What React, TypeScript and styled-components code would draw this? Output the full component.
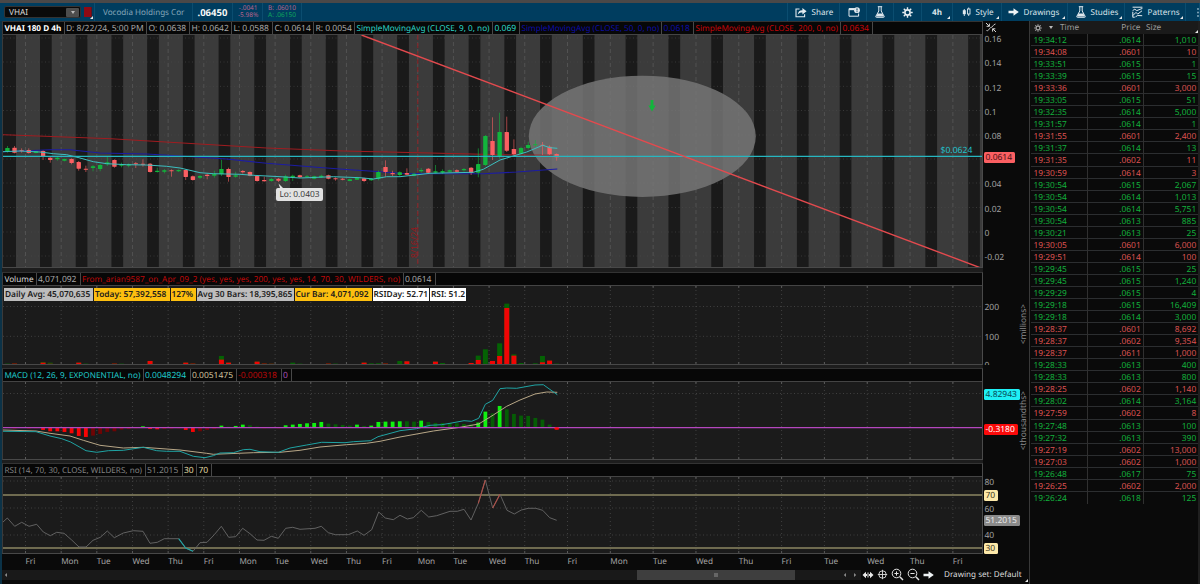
import React from 'react';
import styled, { createGlobalStyle } from 'styled-components';

const Global = createGlobalStyle`
  * { box-sizing: border-box; }
  body {
    margin: 0;
    background: #0a0a0a;
    font-family: 'Noto Sans', 'Open Sans', sans-serif;
    font-size: 8.25px;
    color: #a8a8a8;
    overflow: hidden;
    text-rendering: geometricPrecision;
  }
  svg { display: block; flex: none; }
`;

/* ---------- shell ---------- */

const Page = styled.div`
  width: 1200px;
  height: 584px;
  display: flex;
  flex-direction: column;
  background: #0a0a0a;
  overflow: hidden;
  white-space: nowrap;
`;
const TopStrip = styled.div`
  height: 3px;
  flex: none;
  background: #4a4848;
`;
const Toolbar = styled.header`
  height: 18px;
  flex: none;
  display: flex;
  align-items: stretch;
  background: #003d5f;
  padding-left: 4px;
`;
const ToolCell = styled.div<{ $w: number; $pad?: number }>`
  width: ${p => p.$w}px;
  flex: none;
  display: flex;
  align-items: center;
  padding-left: ${p => p.$pad ?? 8}px;
  gap: 4.5px;
  color: #dbe4ea;
  font-size: 8.1px;
  border-right: 1px solid #0b4d70;
  position: relative;
`;
const Spacer = styled.div`flex: 1; border-right: 1px solid #0b4d70;`;
const Corner = styled.i`
  position: absolute;
  right: 2px;
  bottom: 2px;
  border-left: 3px solid transparent;
  border-bottom: 3px solid #e8e8e8;
`;
const SymbolBox = styled.div`
  width: 77px;
  height: 12px;
  align-self: center;
  display: flex;
  align-items: center;
  justify-content: space-between;
  padding: 0 1px 0 4px;
  background: #0a0a0a;
  border: 1px solid #333;
  border-radius: 2px;
  color: #d8d8d8;
`;
const DropButton = styled.span`
  width: 13px;
  height: 9px;
  display: grid;
  place-items: center;
  background: #4d4d4d;
  border-radius: 1px;
`;
const Triangle = styled.i`
  border: 2.5px solid transparent;
  border-top: 3.5px solid #bbb;
  border-bottom: 0;
`;
const LinkCell = styled.div`
  width: 14px;
  display: flex;
  align-items: center;
  padding-left: 3px;
  border-right: 1px solid #0b4d70;
`;
const LinkBadge = styled.span`
  width: 8px;
  height: 10px;
  background: #8f0a14;
  border-right: 1.5px solid #5a1420;
  position: relative;
`;
const Company = styled.span`color: #84a5b7; font-size: 8.1px;`;
const LastPrice = styled.b`color: #f8f8f8; font-size: 9.5px; font-weight: 700;`;
const Pair = styled.div<{ $right?: boolean }>`
  display: flex;
  flex-direction: column;
  font-size: 6.5px;
  line-height: 6.6px;
  text-align: ${p => (p.$right ? 'center' : 'left')};
`;
const Tone = styled.span<{ $c: string }>`color: ${p => p.$c};`;

const Body = styled.div`
  flex: 1;
  display: flex;
  min-height: 0;
`;
const ChartColumn = styled.main`
  width: 1029px;
  flex: none;
  display: flex;
  flex-direction: column;
  border-left: 2px solid #0b3247;
`;

/* ---------- panels ---------- */

const Panel = styled.section<{ $h: number; $gap?: number }>`
  height: ${p => p.$h}px;
  margin-bottom: ${p => p.$gap ?? 0}px;
  flex: none;
  display: flex;
  position: relative;
  &::after {
    content: '';
    position: absolute;
    left: 0;
    top: 100%;
    width: 981px;
    height: ${p => p.$gap ?? 0}px;
    background: #1d1d1d;
  }
`;
const PanelMain = styled.div`
  width: 981px;
  flex: none;
  border-right: 1px solid #4a4a4a;
  border-left: 1px solid #3a3a3a;
  border-bottom: 1px solid #484848;
  border-top: 1px solid #333;
`;
const Legend = styled.div<{ $h: number }>`
  height: ${p => p.$h}px;
  display: flex;
  background: #070707;
  border-bottom: 1px solid #444;
`;
const LegendCell = styled.span<{ $w: number; $c?: string; $bold?: boolean; $fs?: number }>`
  width: ${p => p.$w}px;
  flex: none;
  padding-left: 1.4px;
  display: flex;
  align-items: center;
  color: ${p => p.$c ?? '#a6a6a6'};
  font-weight: ${p => (p.$bold ? 700 : 400)};
  font-size: ${p => p.$fs ?? 8.5}px;
  border-right: 1px solid #484848;
`;
const Axis = styled.div`
  flex: 1;
  position: relative;
  display: flex;
  justify-content: space-between;
  overflow: hidden;
`;
const Ticks = styled.div<{ $top: number }>`
  padding-top: ${p => p.$top}px;
  padding-left: 1.5px;
  display: flex;
  flex-direction: column;
`;
const Tick = styled.span<{ $h: number }>`
  height: ${p => p.$h}px;
  flex: none;
  line-height: 13px;
  font-size: 8.5px;
  color: #a0a0a0;
`;
const Flag = styled.span<{ $y: number; $bg: string; $c: string; $w: number }>`
  position: absolute;
  left: 1px;
  top: ${p => p.$y}px;
  width: ${p => p.$w}px;
  height: 11px;
  line-height: 11.5px;
  padding-left: 1.5px;
  border-radius: 1.5px;
  background: ${p => p.$bg};
  color: ${p => p.$c};
  font-size: 8.5px;
`;
const Unit = styled.span<{ $top: number }>`
  writing-mode: vertical-rl;
  transform: rotate(180deg);
  align-self: flex-start;
  margin-top: ${p => p.$top}px;
  line-height: 11px;
  font-size: 8.4px;
  color: #8c8c8c;
`;
const Plot = styled.div`position: relative;`;
const StatRow = styled.div`
  position: absolute;
  left: 1px;
  top: 1.5px;
  display: flex;
  gap: 1px;
`;
const Stat = styled.span<{ $bg: string; $w: number }>`
  width: ${p => p.$w}px;
  height: 13px;
  line-height: 13.5px;
  padding-left: 1px;
  background: ${p => p.$bg};
  color: #1c1c1c;
  font-weight: 600;
  font-size: 8.35px;
`;
const LowTip = styled.span`
  position: absolute;
  left: 273px;
  top: 153px;
  width: 47px;
  height: 13px;
  line-height: 14px;
  text-align: center;
  background: #e2e2e2;
  color: #3a3a3a;
  border-radius: 2px;
  font-size: 8.4px;
`;
const LineLabel = styled.span`
  position: absolute;
  left: 937.5px;
  top: 109.2px;
  line-height: 12px;
  color: #22c3cc;
  font-size: 8.6px;
`;

/* ---------- time axis and bottom bar ---------- */

const TimeAxis = styled.div`
  height: 15px;
  flex: none;
  display: flex;
  align-items: center;
  padding-left: 23.5px;
  padding-bottom: 1px;
`;
const Day = styled.span<{ $w: number }>`
  width: ${p => p.$w}px;
  flex: none;
  font-size: 8.2px;
  color: #a6a6a6;
`;
const BottomBar = styled.div`
  height: 11px;
  flex: none;
  display: flex;
  align-items: center;
  color: #dadada;
`;
const ScrollTrack = styled.div`
  width: 859px;
  height: 10px;
  display: flex;
  align-items: center;
  background: #191919;
  padding: 0 4px 0 2px;
`;
const ScrollThumb = styled.div`
  width: 158px;
  height: 10px;
  margin-left: 629px;
  margin-right: auto;
  background: #3e3e3e;
  display: grid;
  place-items: center;
`;
const Grip = styled.i`width: 4px; height: 4px; background: #666;`;
const BarIcons = styled.div`
  display: flex;
  gap: 3px;
  padding-left: 1px;
  width: 83px;
  align-items: center;
`;
const DrawingSet = styled.span`
  font-size: 8.1px;
  width: 85px;
  position: relative;
`;

/* ---------- time and sales ---------- */

const Sales = styled.aside`
  flex: 1;
  border-left: 1.5px solid #383838;
  border-right: 2px solid #1f1f1f;
`;
const SalesHead = styled.div`
  height: 13px;
  display: grid;
  grid-template-columns: 56px 56px 1fr;
  align-items: center;
  background: #1a1a1a;
  color: #9c9c9c;
  position: relative;
`;
const HeadCell = styled.span<{ $right?: boolean }>`
  display: flex;
  align-items: center;
  gap: 7px;
  padding: ${p => (p.$right ? '0 1.5px 0 0' : '0 0 0 4px')};
  justify-content: ${p => (p.$right ? 'flex-end' : 'flex-start')};
`;
const SalesRow = styled.div<{ $up: boolean }>`
  height: 12.06px;
  margin-left: 1px;
  display: grid;
  grid-template-columns: 55.5px 56px 1fr;
  color: ${p => (p.$up ? '#12b03c' : '#dd5251')};
  border-bottom: 1px solid #2c2e30;
  line-height: 13px;
  font-size: 8.4px;
  &:last-child { border-bottom: 0; }
`;
const SalesCell = styled.span<{ $right?: boolean }>`
  height: 12px;
  padding: ${p => (p.$right ? '0 1.8px 0 0' : '0 0 0 2.5px')};
  text-align: ${p => (p.$right ? 'right' : 'left')};
  & + & { border-left: 1px solid #303030; }
`;

/* ---------- data ---------- */

const GREEN = '#12b53c';
const RED = '#fb5f62';
const STEP = 7.134;
const barX = (i: number) => 7.4 + i * STEP;

// [direction, body top, body bottom, wick top, wick bottom], in thirds of a pixel
type Candle = [string, number, number, number, number];
const candles: Candle[] = [
  ['g', 444, 454, 438, 458], ['r', 443, 458, 438, 460], ['r', 451, 454, 445, 458], ['r', 450, 459, 445, 461],
  ['g', 454, 459, 453, 460], ['r', 453, 471, 451, 480], ['r', 473, 480, 470, 488], ['g', 473, 478, 471, 482],
  ['g', 477, 482, 476, 484], ['r', 477, 489, 475, 493], ['r', 486, 506, 483, 512], ['r', 506, 509, 497, 516],
  ['g', 499, 504, 495, 514], ['g', 495, 507, 492, 514], ['g', 487, 493, 468, 498], ['r', 480, 500, 478, 503],
  ['g', 493, 497, 488, 502], ['g', 493, 497, 490, 502], ['r', 490, 493, 486, 504], ['r', 491, 494, 478, 500],
  ['r', 491, 516, 489, 518], ['g', 512, 516, 503, 518], ['g', 511, 515, 507, 520], ['r', 511, 514, 508, 530],
  ['g', 510, 514, 508, 516], ['r', 510, 531, 508, 540], ['r', 529, 540, 526, 542], ['g', 528, 533, 525, 537],
  ['r', 524, 528, 520, 538], ['g', 522, 527, 512, 533], ['g', 507, 523, 479, 528], ['r', 507, 531, 503, 545],
  ['g', 526, 530, 515, 533], ['r', 513, 517, 510, 521], ['r', 516, 527, 514, 529], ['r', 528, 543, 526, 545],
  ['r', 540, 544, 530, 545], ['g', 537, 543, 534, 545], ['r', 536, 542, 534, 546], ['g', 529, 543, 524, 546],
  ['g', 527, 532, 524, 543], ['r', 526, 532, 524, 534], ['g', 528, 530, 525, 532], ['g', 529, 536, 527, 538],
  ['g', 527, 532, 524, 534], ['r', 526, 536, 524, 538], ['r', 535, 538, 532, 542], ['r', 536, 539, 534, 541],
  ['g', 538, 543, 536, 544], ['g', 534, 539, 530, 540], ['r', 535, 543, 533, 546], ['g', 536, 541, 534, 543],
  ['g', 516, 537, 512, 541], ['r', 501, 516, 481, 530], ['r', 519, 523, 512, 528], ['g', 517, 525, 514, 530],
  ['r', 519, 524, 505, 526], ['g', 521, 527, 518, 529], ['g', 510, 514, 504, 518], ['r', 506, 518, 504, 522],
  ['g', 514, 518, 495, 520], ['g', 513, 518, 508, 522], ['g', 511, 515, 509, 517], ['r', 511, 515, 508, 517],
  ['g', 507, 511, 504, 515], ['r', 503, 519, 501, 525], ['g', 492, 518, 445, 532], ['g', 408, 495, 405, 498],
  ['r', 423, 465, 352, 480], ['g', 396, 468, 338, 476], ['r', 396, 452, 350, 456], ['r', 447, 463, 418, 468],
  ['g', 444, 461, 440, 464], ['g', 435, 444, 425, 448], ['g', 433, 436, 420, 440], ['r', 434, 437, 426, 465],
  ['r', 440, 463, 436, 465], ['r', 462, 472, 460, 482],
];

// [bar index, total height, red part], in thirds of a pixel
const volume: [number, number, number][] = [
  [0, 2, 0], [1, 3, 3], [5, 7, 5], [6, 5, 2], [10, 5, 5], [11, 2, 0], [15, 3, 3], [16, 2, 0], [20, 10, 10],
  [25, 5, 5], [26, 3, 3], [30, 25, 14], [31, 5, 5], [35, 8, 8], [36, 3, 3], [37, 2, 2], [40, 5, 0], [41, 2, 0],
  [45, 3, 3], [46, 2, 0], [50, 5, 5], [51, 3, 0], [52, 3, 0], [53, 3, 3], [55, 10, 0], [56, 9, 9], [60, 8, 8],
  [61, 4, 0], [65, 4, 4], [66, 26, 13], [67, 45, 0], [68, 10, 10], [69, 63, 25], [70, 182, 169], [71, 30, 26],
  [72, 4, 0], [74, 3, 0], [75, 25, 6], [76, 11, 11], [77, 2, 0],
];

// signed heights in thirds of a pixel; the second entry marks a strengthening bar
const histogram: [number, number][] = [
  [-2, 0], [-4, 0], [0, 0], [-4, 0], [-3, 0], [-8, 1], [-12, 1], [-12, 1], [-14, 1], [-18, 1], [-26, 1], [-29, 1],
  [-25, 0], [-20, 0], [-14, 0], [-12, 0], [-7, 0], [-5, 0], [-3, 0], [3, 1], [-5, 1], [-6, 1], [-5, 0], [-4, 0],
  [-3, 0], [-8, 1], [-14, 1], [-12, 0], [-8, 0], [-5, 0], [5, 1], [2, 0], [4, 1], [8, 1], [6, 0], [2, 0],
  [-3, 0], [-2, 0], [-3, 0], [6, 1], [8, 1], [10, 1], [12, 1], [13, 1], [16, 1], [11, 0], [9, 0], [7, 0],
  [5, 0], [8, 1], [4, 0], [5, 1], [16, 1], [17, 1], [17, 1], [18, 1], [18, 0], [17, 0], [20, 1], [16, 0],
  [13, 0], [13, 0], [13, 0], [12, 0], [10, 0], [9, 0], [14, 1], [47, 1], [42, 0], [64, 1], [54, 0], [40, 0],
  [35, 0], [34, 0], [28, 0], [23, 0], [8, 0], [-6, 1],
];

const thirds = (s: string, dy = 0) =>
  s.split(' ').map(p => {
    const [x, y] = p.split(',').map(Number);
    return `${(x / 3).toFixed(1)},${(y / 3 + dy).toFixed(1)}`;
  }).join(' ');

const sma9 = thirds('8,455 60,453 120,456 160,461 200,464 240,474 280,485 320,491 380,494 440,495 500,499 540,504 570,511 600,518 640,521 720,523 760,526 840,530 900,534 1000,530 1080,533 1120,537 1160,530 1200,530 1290,520 1420,517 1450,508 1500,480 1540,468 1580,456 1628,436 1650,443 1672,445');
const sma50 = thirds('8,455 150,449 210,449 300,459 440,462 540,468 680,477 800,490 950,502 1050,509 1120,514 1200,520 1300,521 1450,521 1550,516 1672,507');
const sma200 = thirds('8,404 330,416 800,444 1030,453 1200,457 1500,464 1660,466');
const macd = thirds('8,199 108,200 150,213 185,221 212,231 258,257 290,262 325,257 370,256 430,247 470,257 500,259 540,259 580,274 615,278 640,272 660,264 700,263 730,254 750,253 780,260 835,262 870,249 920,240 965,232 1035,233 1060,230 1112,227 1134,215 1200,197 1250,191 1290,181 1325,179 1350,175 1392,167 1415,169 1436,160 1456,118 1478,106 1500,71 1520,69 1550,70 1605,60 1630,59 1672,89', 365);
const signal = thirds('8,195 108,198 150,205 210,213 250,226 300,241 370,249 430,247 540,255 620,265 640,268 760,263 840,262 900,256 960,246 1040,239 1100,235 1140,229 1200,216 1300,198 1380,187 1436,177 1480,150 1520,124 1560,105 1605,87 1640,81 1672,82', 365);
const rsi = thirds('8,472 22,459 44,484 65,472 87,484 110,478 130,501 151,512 170,502 192,505 215,525 237,546 258,546 279,526 301,517 322,498 343,518 370,504 400,497 429,499 450,535 472,532 493,521 536,521 557,549 579,559 600,533 621,532 643,509 664,484 686,517 707,515 728,490 750,506 771,525 792,526 814,514 835,520 857,490 878,487 900,493 945,490 964,484 985,503 1006,509 1045,509 1072,498 1092,511 1115,494 1136,441 1156,459 1180,464 1200,451 1222,462 1240,458 1264,436 1286,456 1310,452 1350,439 1372,439 1392,433 1413,465 1435,415 1456,345 1478,429 1500,388 1521,436 1543,447 1564,435 1585,430 1607,430 1628,436 1649,458 1670,466', 365);
const rsiLow = thirds('536,521 557,549 579,559', 365);
const rsiHigh1 = thirds('1435,415 1456,345', 365);
const rsiHigh2 = thirds('1478,429 1500,388', 365);

const dayLabels = ['Fri', 'Mon', 'Tue', 'Wed', 'Thu', 'Fri', 'Mon', 'Tue', 'Wed', 'Thu', 'Fri', 'Mon', 'Tue', 'Wed', 'Thu', 'Fri', 'Mon', 'Tue', 'Wed', 'Thu', 'Fri', 'Tue', 'Wed', 'Thu', 'Fri'];
const dayX = dayLabels.map((_, i) => (i < 15 ? 25.5 + i * 35.66 : 567.5 + (i - 15) * 42.82));
const closedX = [...Array(15)].map((_, i) => 40 + i * 35.72).concat([...Array(10)].map((_, i) => 582.8 + i * 42.82));

const sales: [string, string, string, 0 | 1][] = [
  ['19:34:12', '.0614', '1,010', 1], ['19:34:08', '.0601', '10', 0], ['19:33:51', '.0615', '1', 1],
  ['19:33:39', '.0615', '15', 1], ['19:33:36', '.0601', '3,000', 0], ['19:33:05', '.0615', '51', 1],
  ['19:32:35', '.0614', '5,000', 1], ['19:31:57', '.0614', '1', 1], ['19:31:55', '.0601', '2,400', 0],
  ['19:31:37', '.0614', '13', 1], ['19:31:35', '.0602', '11', 0], ['19:30:59', '.0614', '3', 0],
  ['19:30:54', '.0615', '2,067', 1], ['19:30:54', '.0614', '1,013', 1], ['19:30:54', '.0614', '5,751', 1],
  ['19:30:54', '.0613', '885', 1], ['19:30:21', '.0613', '25', 1], ['19:30:05', '.0601', '6,000', 0],
  ['19:29:51', '.0614', '100', 0], ['19:29:45', '.0615', '25', 1], ['19:29:45', '.0615', '1,240', 1],
  ['19:29:29', '.0615', '4', 1], ['19:29:18', '.0615', '16,409', 1], ['19:29:18', '.0614', '3,000', 1],
  ['19:28:37', '.0601', '8,692', 0], ['19:28:37', '.0602', '9,354', 0], ['19:28:37', '.0611', '1,000', 0],
  ['19:28:33', '.0613', '400', 1], ['19:28:33', '.0613', '800', 1], ['19:28:25', '.0602', '1,140', 0],
  ['19:28:02', '.0614', '3,164', 1], ['19:27:59', '.0602', '8', 0], ['19:27:48', '.0613', '100', 1],
  ['19:27:32', '.0613', '390', 1], ['19:27:19', '.0602', '13,000', 0], ['19:27:03', '.0602', '1,000', 0],
  ['19:26:48', '.0617', '75', 1], ['19:26:25', '.0602', '2,000', 0], ['19:26:24', '.0618', '125', 1],
];

/* ---------- icons ---------- */

const FlaskIcon = () => (
  <svg width="10" height="12" viewBox="0 0 10 12" fill="none" stroke="#dfe8ee" strokeWidth="1">
    <path d="M2.8 .7h4.4M3.8 .7v4.3L.8 10.4q-.3 .9.6 .9h7.2q.9 0 .6-.9L6.2 5V.7" />
    <path d="M2.6 7.6h4.8l1.4 3H1.2z" fill="#dfe8ee" stroke="none" />
  </svg>
);
const GearIcon = ({ size = 11, color = '#e8eef2' }: { size?: number; color?: string }) => (
  <svg width={size} height={size} viewBox="0 0 11 11" fill="none" stroke={color}>
    <circle cx="5.5" cy="5.5" r="2.6" strokeWidth="1.6" />
    <path d="M5.5 .3v2M5.5 8.7v2M.3 5.5h2M8.7 5.5h2M1.8 1.8l1.4 1.4M7.8 7.8l1.4 1.4M1.8 9.2l1.4-1.4M7.8 3.2l1.4-1.4" strokeWidth="1.4" />
  </svg>
);
const ShareIcon = () => (
  <svg width="12" height="11" viewBox="0 0 12 11" fill="none" stroke="#e2eaef" strokeWidth="1.1">
    <path d="M4.5 2H1v7.8h8.6V7.2" />
    <path d="M2.8 7.6c.3-2.9 1.8-4.3 4.6-4.3V1l4.2 3.3-4.2 3.2V5.4c-2.2 0-3.6.6-4.6 2.2z" fill="#e2eaef" stroke="none" />
  </svg>
);
const CalendarIcon = () => (
  <svg width="12" height="10" viewBox="0 0 12 10" fill="none" stroke="#e2eaef">
    <path d="M7 1.6H1v7.6h9.6V6.5" strokeWidth="1" />
    <path d="M1 2.4h5.6" strokeWidth="1.6" />
    <circle cx="9" cy="3.2" r="2.9" fill="#e2eaef" stroke="none" />
    <path d="M9 1.4v2.1M9 4.2v1" stroke="#003d5f" strokeWidth="1" />
  </svg>
);
const StyleIcon = () => (
  <svg width="9" height="10" viewBox="0 0 9 10" fill="none" stroke="#e2eaef">
    <path d="M2.3 2v7M6.7 .5v1.5M6.7 7v2" strokeWidth=".9" />
    <rect x=".8" y="3.2" width="3" height="4" fill="#e2eaef" stroke="none" />
    <rect x="5.5" y="2" width="2.5" height="5" strokeWidth=".9" />
  </svg>
);
const ArrowIcon = ({ w = 11 }: { w?: number }) => (
  <svg width={w} height="8" viewBox="0 0 11 8" fill="#eef2f4">
    <path d="M.5 2.8h5V.2L10.8 4 5.5 7.8V5.2h-5z" />
  </svg>
);
const PatternsIcon = () => (
  <svg width="11" height="12" viewBox="0 0 11 12" fill="none" stroke="#e2eaef" strokeWidth="1">
    <path d="M.6 1.2h9.8M.6 4.6l2.2-1.4 2 1.4L10.4 2.4M.8 5.8v5.5M.8 11.2h2M.8 9.6L4 6.4l1.700 1.700 4.300-3.300M3.500 10.800l2.200-1.300 4.500 .2" />
  </svg>
);
const MoreIcon = () => (
  <svg width="2" height="11" viewBox="0 0 2 11" fill="#8fb0c2">
    <circle cx="1" cy="2" r=".9" /><circle cx="1" cy="5.5" r=".9" /><circle cx="1" cy="9" r=".9" />
  </svg>
);
const ExpandIcon = () => (
  <svg width="12" height="11" viewBox="0 0 12 11" fill="none" stroke="#d8d8d8" strokeWidth="1">
    <path d="M1 1l3.200 3.200M4.400 1.600v2.700H1.600M11 10L7.800 6.800M10.300 6.800H7.600v2.800" />
    <path d="M1.500 8.500c2.600 1 2.200-2.500 4.500-3s1.700-3 4.500-3.500" strokeWidth=".9" />
  </svg>
);
const PanIcon = () => (
  <svg width="12" height="8" viewBox="0 0 12 8" fill="#e8e8e8">
    <path d="M.5 4L4 .8v2.200h1v2H4v2.200zM11.500 4L8 .8v2.200H7v2h1v2.200zM5.500 1.500h1v5h-1z" />
  </svg>
);
const CrosshairIcon = () => (
  <svg width="11" height="11" viewBox="0 0 11 11" fill="none" stroke="#dcdcdc" strokeWidth=".9">
    <circle cx="5.500" cy="5.500" r="3.700" /><path d="M5.500 .8v9.400M.8 5.500h9.400" />
  </svg>
);
const ZoomIcon = ({ plus }: { plus?: boolean }) => (
  <svg width="13" height="13" viewBox="0 0 13 13" fill="none" stroke="#e4e4e4">
    <circle cx="5.500" cy="5.500" r="4.300" strokeWidth="1" />
    <path d={plus ? 'M3.400 5.500h4.200M5.500 3.400v4.200' : 'M3.400 5.500h4.200'} strokeWidth="1" />
    <path d="M8.800 8.800l3.200 3.200" strokeWidth="1.500" />
  </svg>
);
const ChevronIcon = ({ right }: { right?: boolean }) => (
  <svg width="4" height="6" viewBox="0 0 4 6" fill="#8a8a8a">
    <path d={right ? 'M1 1l2.200 2L1 5z' : 'M3 1L.8 3 3 5z'} />
  </svg>
);

/* ---------- charts ---------- */

const DayGrid = ({ y1, y2, dash, color }: { y1: number; y2: number; dash: string; color: string }) => (
  <g stroke={color} strokeWidth="1" strokeDasharray={dash}>
    {dayX.map(x => <line key={x} x1={x} x2={x} y1={y1} y2={y2} />)}
  </g>
);
const DayTicks = ({ ys }: { ys: number[] }) => (
  <g stroke="#5a5a5a" strokeWidth="1">
    {ys.map(y => dayX.map(x => <line key={`${x}-${y}`} x1={x} x2={x} y1={y} y2={y + 2} />))}
  </g>
);
const Rows = ({ ys }: { ys: number[] }) => (
  <g stroke="#4a4a4a" strokeWidth=".8" strokeDasharray="1 2.500">
    {ys.map(y => <line key={y} x1="3" x2="982" y1={y} y2={y} />)}
  </g>
);

const PriceChart = () => (
  <svg width="979" height="232" viewBox="3 35 979 232">
    <rect x="3" y="35" width="979" height="233" fill="#3b3b3b" />
    <rect x="3" y="35" width="13" height="233" fill="#1a1a1a" />
    {closedX.map(x => <rect key={x} x={x} y="35" width="11.700" height="233" fill="#1a1a1a" />)}
    <g opacity=".8"><Rows ys={[38, 62, 86.300, 110.500, 135, 159, 183, 207.500, 232, 256]} /></g>
    <DayGrid y1={35} y2={268} dash="4 3" color="#525252" />
    <line x1="417.800" x2="417.800" y1="35" y2="268" stroke="#8e2024" strokeWidth="1" strokeDasharray="5 3" />
    <text transform="translate(416.500 258) rotate(-90)" fill="#96191d" fontSize="8.600">8/16/24</text>
    <ellipse cx="642.300" cy="136.300" rx="113.500" ry="60.600" fill="#757575" opacity=".85" />
    <polyline points={sma200} fill="none" stroke="#a01c20" strokeWidth="1" />
    <polyline points={sma50} fill="none" stroke="#1c1ca4" strokeWidth="1.100" />
    {candles.map(([d, top, bottom, high, low], i) => {
      const c = d === 'g' ? GREEN : RED;
      return (
        <g key={i} fill={c}>
          <rect x={barX(i) - .4} y={high / 3} width=".8" height={(low - high) / 3} opacity=".75" />
          <rect x={barX(i) - 2.200} y={top / 3} width="4.400" height={(bottom - top) / 3} rx=".4" />
        </g>
      );
    })}
    <polyline points={sma9} fill="none" stroke="#3cc0c0" strokeWidth="1" />
    <line x1="3" x2="982" y1="156.400" y2="156.400" stroke="#27b6c0" strokeWidth="1.100" />
    <line x1="361.500" x2="981" y1="35" y2="268" stroke="#e34a4e" strokeWidth="1.400" />
    <path d="M650.600 100h2.800v5.500h2.200L652 111.500l-3.600-6h2.200z" fill="#12b53c" />
    <path d="M278.500 183.500l2 6h4z" fill="#e2e2e2" />
  </svg>
);

const VolumeChart = () => (
  <svg width="979" height="78" viewBox="3 286 979 78">
    <rect x="3" y="286" width="979" height="79" fill="#1b1b1b" />
    <Rows ys={[306.500, 336.300]} />
    <DayGrid y1={286} y2={364} dash="1 3" color="#404040" />
    <DayTicks ys={[286, 362]} />
    {volume.map(([i, total, red]) => (
      <g key={i}>
        <rect x={barX(i) - 2.500} y={364.300 - total / 3} width="5" height={total / 3} fill="#046204" />
        <rect x={barX(i) - 2.500} y={364.300 - red / 3} width="5" height={red / 3} fill={red > 3 ? '#f00505' : '#8c0505'} />
      </g>
    ))}
  </svg>
);

const MacdChart = () => (
  <svg width="979" height="77" viewBox="3 382 979 77">
    <rect x="3" y="382" width="979" height="78" fill="#1b1b1b" />
    <Rows ys={[393.500]} />
    <DayGrid y1={382} y2={459} dash="1 3" color="#404040" />
    <DayTicks ys={[382, 457]} />
    {histogram.map(([h, strong], i) => (
      <rect
        key={i}
        x={barX(i) - 1.900}
        y={427.300 - Math.max(h, 0) / 3}
        width="3.800"
        height={Math.abs(h) / 3}
        fill={h > 0 ? (strong ? '#10f010' : '#055c05') : strong ? '#f80404' : '#6e0404'}
      />
    ))}
    <polyline points={signal} fill="none" stroke="#b8a787" strokeWidth="1" />
    <polyline points={macd} fill="none" stroke="#1fa3a3" strokeWidth="1" />
    <line x1="3" x2="982" y1="427.600" y2="427.600" stroke="#b446be" strokeWidth="1.300" />
    <ellipse cx={barX(77)} cy="428.500" rx="2.500" ry="1.300" fill="#f80404" />
  </svg>
);

const RsiChart = () => (
  <svg width="979" height="76" viewBox="3 477 979 76">
    <rect x="3" y="477" width="979" height="77" fill="#1b1b1b" />
    <Rows ys={[481, 508, 535]} />
    <DayGrid y1={477} y2={553} dash="1 3" color="#404040" />
    <DayTicks ys={[477, 551]} />
    <g stroke="#8d8763" strokeWidth="1.500">
      <line x1="3" x2="982" y1="495" y2="495" />
      <line x1="3" x2="982" y1="548" y2="548" />
    </g>
    <polyline points={rsi} fill="none" stroke="#696969" strokeWidth=".9" />
    <polyline points={rsiLow} fill="none" stroke="#1fa3a3" strokeWidth="1.100" />
    <polyline points={rsiHigh1} fill="none" stroke="#b05048" strokeWidth="1.100" />
    <polyline points={rsiHigh2} fill="none" stroke="#b05048" strokeWidth="1.100" />
  </svg>
);

/* ---------- page ---------- */

export default function App() {
  return (
    <Page>
      <Global />
      <TopStrip />
      <Toolbar>
        <SymbolBox>VHAI<DropButton><Triangle /></DropButton></SymbolBox>
        <LinkCell><LinkBadge><Corner style={{ right: -2, bottom: -2 }} /></LinkBadge></LinkCell>
        <ToolCell $w={98}><Company>Vocodia Holdings Cor</Company></ToolCell>
        <ToolCell $w={40} $pad={4.5}><LastPrice>.06450</LastPrice></ToolCell>
        <ToolCell $w={30} $pad={5}>
          <Pair $right><Tone $c="#b5638c">-.0041</Tone><Tone $c="#b5638c">-5.98%</Tone></Pair>
        </ToolCell>
        <ToolCell $w={39} $pad={5}>
          <Pair><Tone $c="#b5638c">B: .06010</Tone><Tone $c="#0fa55c">A: .06150</Tone></Pair>
        </ToolCell>
        <Spacer />
        <ToolCell $w={52} $pad={7}><ShareIcon />Share</ToolCell>
        <ToolCell $w={27}><CalendarIcon /></ToolCell>
        <ToolCell $w={27}><FlaskIcon /></ToolCell>
        <ToolCell $w={28}><GearIcon /></ToolCell>
        <ToolCell $w={31} $pad={10}><b>4h</b><Corner /></ToolCell>
        <ToolCell $w={49} $pad={9}><StyleIcon />Style<Corner /></ToolCell>
        <ToolCell $w={66} $pad={6}><ArrowIcon />Drawings<Corner /></ToolCell>
        <ToolCell $w={57} $pad={8}><FlaskIcon />Studies<Corner /></ToolCell>
        <ToolCell $w={61} $pad={7}><PatternsIcon />Patterns<Corner /></ToolCell>
        <ToolCell $w={14} $pad={11}><MoreIcon /></ToolCell>
      </Toolbar>
      <Body>
        <ChartColumn>
          <Panel $h={247} $gap={4}>
            <PanelMain>
              <Legend $h={13}>
                <LegendCell $w={61.5} $c="#fff" $bold $fs={8.2}>VHAI 180 D 4h</LegendCell>
                <LegendCell $w={82.5}>D: 8/22/24, 5:00 PM</LegendCell>
                <LegendCell $w={43}>O: 0.0638</LegendCell>
                <LegendCell $w={42}>H: 0.0642</LegendCell>
                <LegendCell $w={41}>L: 0.0588</LegendCell>
                <LegendCell $w={41}>C: 0.0614</LegendCell>
                <LegendCell $w={41}>R: 0.0054</LegendCell>
                <LegendCell $w={138} $c="#2bd6c6" $fs={8.2}>SimpleMovingAvg (CLOSE, 9, 0, no)</LegendCell>
                <LegendCell $w={27} $c="#2bd6c6">0.069</LegendCell>
                <LegendCell $w={142} $c="#0c0ca4" $fs={8.2}>SimpleMovingAvg (CLOSE, 50, 0, no)</LegendCell>
                <LegendCell $w={32} $c="#0c0ca4">0.0618</LegendCell>
                <LegendCell $w={147} $c="#c80508" $fs={8.2}>SimpleMovingAvg (CLOSE, 200, 0, no)</LegendCell>
                <LegendCell $w={32} $c="#c80508">0.0634</LegendCell>
              </Legend>
              <Plot>
                <PriceChart />
                <LowTip>Lo: 0.0403</LowTip>
                <LineLabel>$0.0624</LineLabel>
              </Plot>
            </PanelMain>
            <Axis>
              <Ticks $top={1}>
                <Tick $h={11.3}><ExpandIcon /></Tick>
                {['0.16', '0.14', '0.12', '0.1', '0.08', '', '0.04', '0.02', '0', '-0.02'].map((t, i) => (
                  <Tick key={i} $h={24.2}>{t}</Tick>
                ))}
              </Ticks>
              <Flag $y={131} $w={31} $bg="#fb5f62" $c="#4a1214">0.0614</Flag>
            </Axis>
          </Panel>

          <Panel $h={93} $gap={3}>
            <PanelMain>
              <Legend $h={13}>
                <LegendCell $w={33.5} $c="#d8d8d8" $fs={8.2}>Volume</LegendCell>
                <LegendCell $w={44}>4,071,092</LegendCell>
                <LegendCell $w={323} $c="#bc0808" $fs={8.27}>From_arian9587_on_Apr_09_2 (yes, yes, yes, 200, yes, yes, 14, 70, 30, WILDERS, no)</LegendCell>
                <LegendCell $w={32}>0.0614</LegendCell>
              </Legend>
              <Plot>
                <VolumeChart />
                <StatRow>
                  <Stat $w={89} $bg="#bdbdbd">Daily Avg: 45,070,635</Stat>
                  <Stat $w={75.5} $bg="#fdbf0f">Today: 57,392,558</Stat>
                  <Stat $w={25} $bg="#fdbf0f">127%</Stat>
                  <Stat $w={97} $bg="#bdbdbd">Avg 30 Bars: 18,395,865</Stat>
                  <Stat $w={77} $bg="#fdbf0f">Cur Bar: 4,071,092</Stat>
                  <Stat $w={56.5} $bg="#fff">RSIDay: 52.71</Stat>
                  <Stat $w={36} $bg="#fff">RSI: 51.2</Stat>
                </StatRow>
              </Plot>
            </PanelMain>
            <Axis>
              <Ticks $top={29}>
                <Tick $h={29.5}>200</Tick>
                <Tick $h={28.5}>100</Tick>
                <Tick $h={12}>0</Tick>
              </Ticks>
              <Unit $top={32}>&lt;millions&gt;</Unit>
            </Axis>
          </Panel>

          <Panel $h={92} $gap={3}>
            <PanelMain>
              <Legend $h={13}>
                <LegendCell $w={140.5} $c="#1fc9c9" $fs={8.2}>MACD (12, 26, 9, EXPONENTIAL, no)</LegendCell>
                <LegendCell $w={47} $c="#1fc9c9">0.0048294</LegendCell>
                <LegendCell $w={46} $c="#cdc09a">0.0051475</LegendCell>
                <LegendCell $w={45} $c="#bc0808">-0.000318</LegendCell>
                <LegendCell $w={10} $c="#a64fb5">0</LegendCell>
              </Legend>
              <Plot><MacdChart /></Plot>
            </PanelMain>
            <Axis>
              <Flag $y={21} $w={36} $bg="#1ff0f5" $c="#064a55">4.82943</Flag>
              <Flag $y={56} $w={34} $bg="#fb0a0a" $c="#fff">-0.3180</Flag>
              <span />
              <Unit $top={23}>&lt;thousandths&gt;</Unit>
            </Axis>
          </Panel>

          <Panel $h={91}>
            <PanelMain>
              <Legend $h={13}>
                <LegendCell $w={142.5} $c="#808080" $fs={8.15}>RSI (14, 70, 30, CLOSE, WILDERS, no)</LegendCell>
                <LegendCell $w={37} $c="#808080">51.2015</LegendCell>
                <LegendCell $w={14.5} $c="#e0d8a4">30</LegendCell>
                <LegendCell $w={14.5} $c="#e0d8a4">70</LegendCell>
              </Legend>
              <Plot><RsiChart /></Plot>
            </PanelMain>
            <Axis>
              <Ticks $top={13}>
                <Tick $h={26.7}>80</Tick>
                <Tick $h={26.7}>60</Tick>
                <Tick $h={12}>40</Tick>
              </Ticks>
              <Flag $y={26.5} $w={14} $bg="#fde9a9" $c="#3d3720">70</Flag>
              <Flag $y={51.5} $w={36} $bg="#8a8a8a" $c="#e8e8e8">51.2015</Flag>
              <Flag $y={79.5} $w={14} $bg="#fde9a9" $c="#3d3720">30</Flag>
            </Axis>
          </Panel>

          <TimeAxis>
            {dayLabels.map((d, i) => (
              <Day key={i} $w={(dayX[i + 1] ?? dayX[i] + 30) - dayX[i]}>{d}</Day>
            ))}
          </TimeAxis>
          <BottomBar>
            <ScrollTrack>
              <ChevronIcon />
              <ScrollThumb><Grip /></ScrollThumb>
              <ChevronIcon />
              <span style={{ width: 6 }} />
              <ChevronIcon right />
            </ScrollTrack>
            <BarIcons>
              <PanIcon /><CrosshairIcon /><ZoomIcon plus /><ZoomIcon /><ArrowIcon />
            </BarIcons>
            <DrawingSet>Drawing set: Default<Corner style={{ right: 1, bottom: -2 }} /></DrawingSet>
          </BottomBar>
        </ChartColumn>

        <Sales>
          <SalesHead>
            <HeadCell><GearIcon size={8} color="#a8a8a8" /><Triangle />Time</HeadCell>
            <HeadCell $right>Price</HeadCell>
            <HeadCell>Size</HeadCell>
            <Corner style={{ right: 0, bottom: 1 }} />
          </SalesHead>
          {sales.map(([time, price, size, up], i) => (
            <SalesRow key={i} $up={up === 1}>
              <SalesCell>{time}</SalesCell>
              <SalesCell $right>{price}</SalesCell>
              <SalesCell $right>{size}</SalesCell>
            </SalesRow>
          ))}
        </Sales>
      </Body>
    </Page>
  );
}
